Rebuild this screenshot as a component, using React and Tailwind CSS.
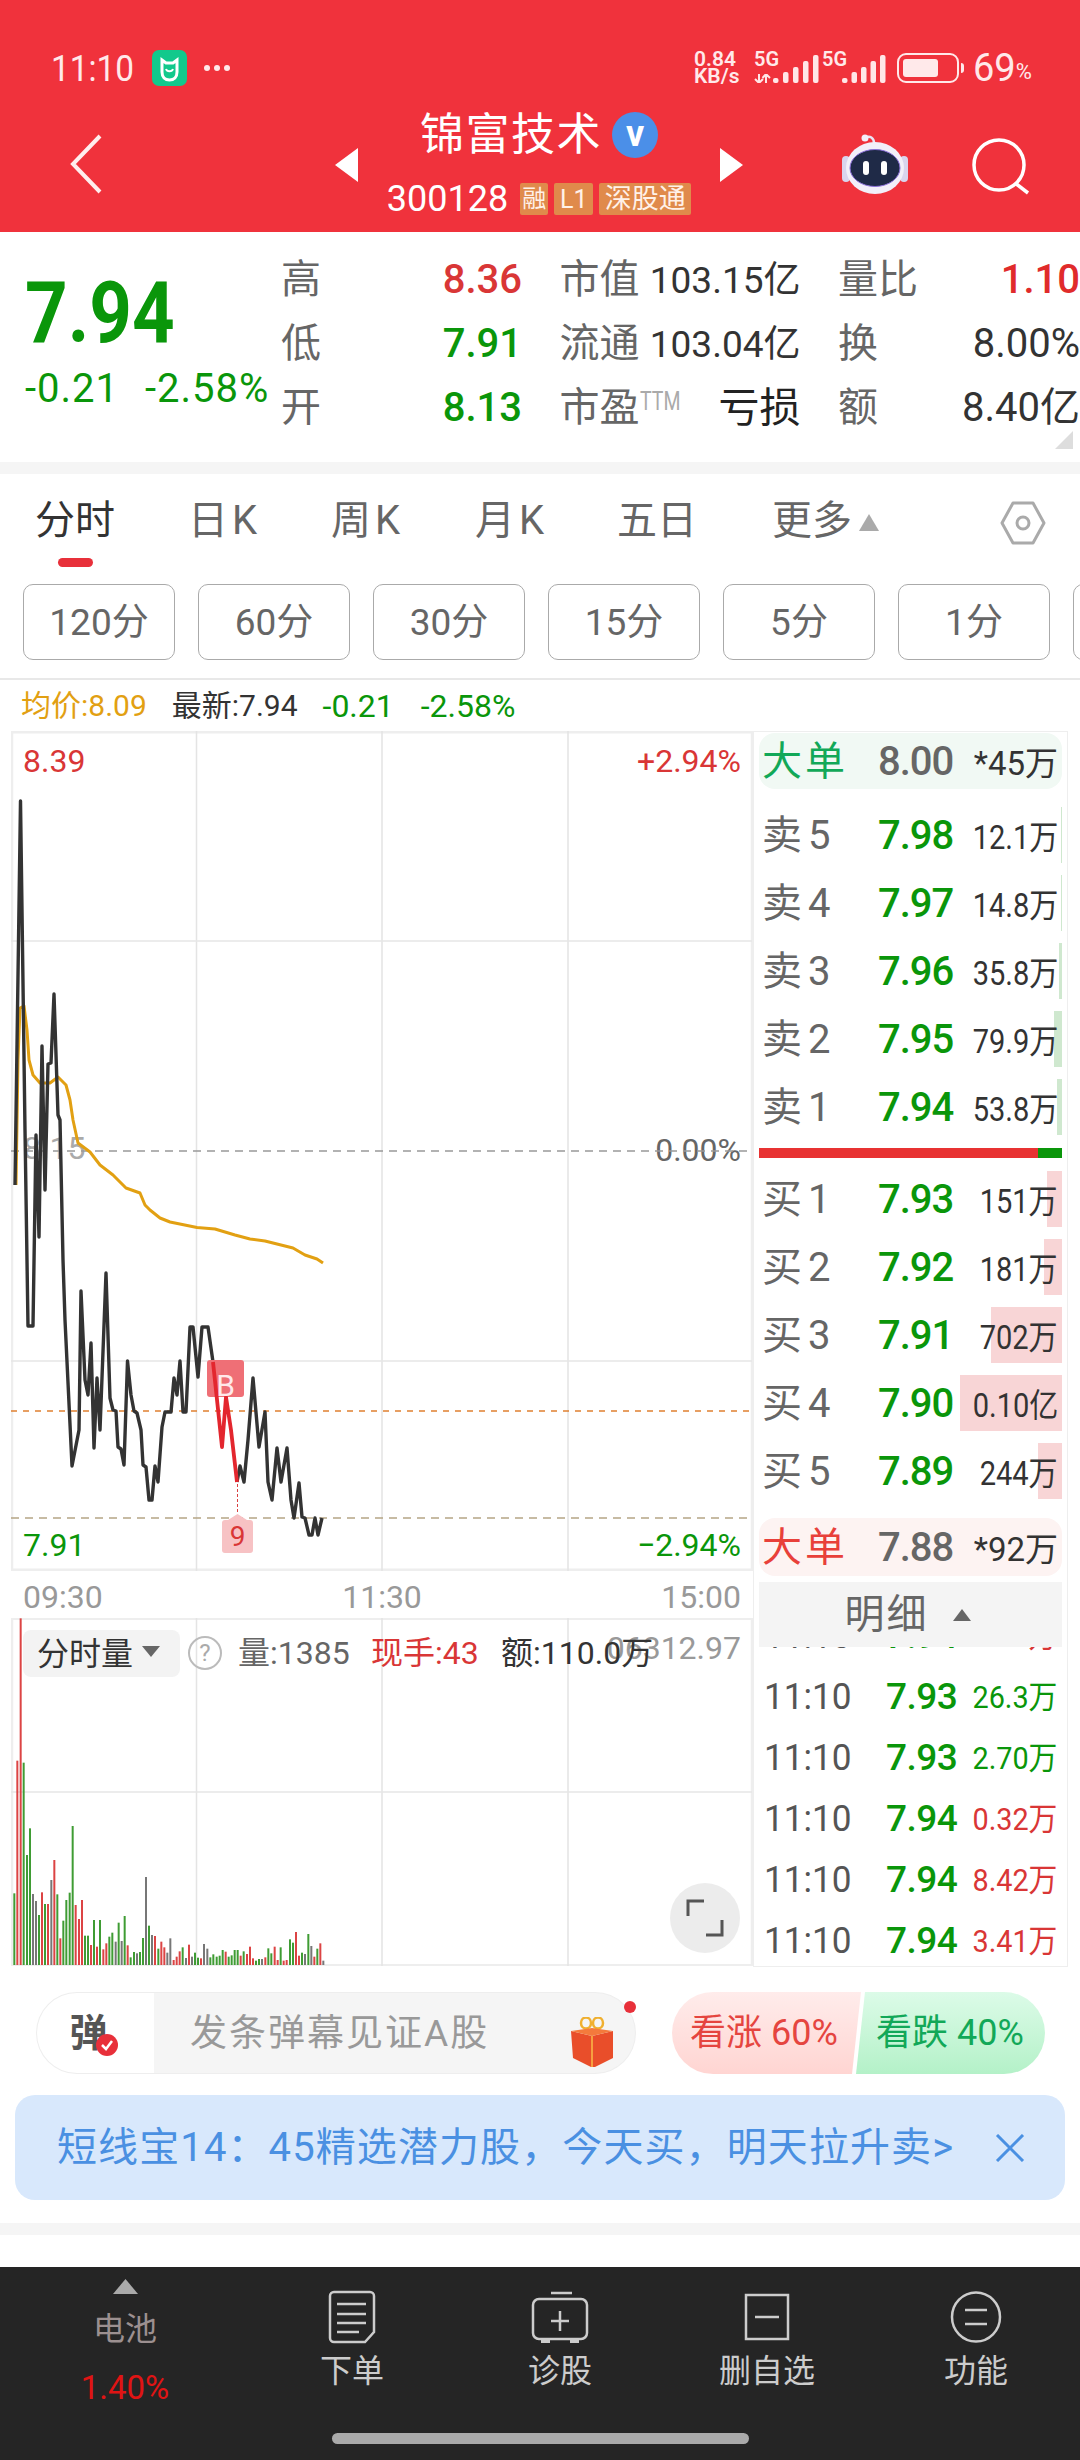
import React from 'react';

const GREEN = 'text-[#0a960a]';

// 分时线 (page coordinates)
const blackA = '15,1185 20.5,801 25,1130 28,1326 33,1326 36,1135 39,1237 42,1046 45,1190 48,1064 51,1063 54,994 58,1115 60,1120 63,1260 65,1320 72,1466 79,1430 81,1291 85,1380 88,1395 91,1343 94,1448 97,1378 100,1430 106,1273 110,1398 113,1410 116,1411 118,1447 121,1449 124,1465 127.5,1361 131,1395 134,1411 137,1413 141,1430 143,1465 146,1467 149,1500 152,1500 155,1466 158,1482 162,1427 165,1412 171,1412 174,1378 177,1395 180,1361 183,1412 186,1412 190,1327 193,1327 198,1377 202,1327 208,1327 213,1362';
const redLine = '213,1362 222,1447 226,1397 231,1430 237,1482';
const blackB = '237,1482 240,1466 244,1482 248,1440 253,1378 259,1447 265,1412 268,1482 272,1500 277,1448 281,1482 287,1448 291,1500 294,1518 299,1483 302,1517 305,1518 309,1535 312,1535 315,1518 318,1535 322,1518';
const avgLine = '16,1185 18,1060 20,1008 24,1006 27,1030 29,1060 33,1075 40,1083 50,1083 58,1077 66,1085 70,1100 73,1120 78,1143 90,1152 100,1165 113,1175 126,1188 140,1193 145,1205 150,1210 160,1218 170,1222 197,1227.5 215,1229 235,1235 250,1239 265,1241 285,1246 293,1248 305,1255 317,1259 323,1263';

// 成交量柱: [x*3, top*3 offset, colour]
const volBars = [
  [43, 850, 'g'], [52, 452, 'r'], [62, 25, 'r'], [71, 458, 'g'], [81, 735, 'g'], [90, 655, 'g'], [99, 852, 'k'], [108, 873, 'k'], [117, 915, 'g'], [126, 847, 'r'],
  [135, 882, 'g'], [144, 882, 'r'], [154, 810, 'k'], [163, 750, 'r'], [172, 853, 'g'], [181, 985, 'r'], [190, 932, 'g'], [199, 870, 'g'], [209, 848, 'g'], [218, 648, 'g'],
  [227, 885, 'r'], [237, 927, 'r'], [246, 870, 'r'], [255, 977, 'g'], [264, 977, 'g'], [273, 1005, 'r'], [282, 930, 'g'], [291, 1010, 'r'], [300, 930, 'g'], [310, 1018, 'r'],
  [319, 1000, 'r'], [328, 980, 'g'], [337, 968, 'g'], [347, 995, 'k'], [356, 938, 'g'], [365, 993, 'k'], [374, 918, 'g'], [383, 1006, 'r'], [392, 1042, 'g'], [402, 1026, 'g'],
  [411, 1030, 'k'], [420, 1026, 'g'], [429, 984, 'g'], [438, 801, 'k'], [447, 947, 'g'], [456, 975, 'k'], [465, 978, 'r'], [475, 1016, 'g'], [484, 995, 'r'], [493, 1012, 'r'],
  [502, 1028, 'k'], [511, 985, 'k'], [521, 1050, 'r'], [530, 1040, 'r'], [539, 1024, 'r'], [548, 1012, 'g'], [558, 1044, 'k'], [567, 1004, 'r'], [576, 1040, 'k'], [585, 1028, 'g'],
  [594, 1043, 'g'], [603, 1045, 'r'], [612, 1002, 'k'], [622, 1016, 'k'], [631, 1042, 'g'], [640, 1033, 'g'], [650, 1040, 'g'], [659, 1037, 'g'], [668, 1020, 'g'], [677, 1025, 'r'],
  [686, 1040, 'g'], [695, 1036, 'g'], [704, 1020, 'g'], [713, 1020, 'g'], [722, 1037, 'r'], [731, 1024, 'g'], [741, 1032, 'r'], [750, 1010, 'r'], [759, 1045, 'r'], [768, 1052, 'g'],
  [777, 1047, 'g'], [786, 1047, 'k'], [796, 1042, 'r'], [805, 1015, 'g'], [814, 1030, 'g'], [824, 1010, 'r'], [833, 1050, 'r'], [842, 1012, 'g'], [851, 1052, 'r'], [860, 1050, 'r'],
  [870, 988, 'g'], [879, 998, 'g'], [888, 966, 'r'], [897, 1037, 'r'], [906, 1028, 'g'], [915, 1032, 'k'], [925, 972, 'g'], [934, 1008, 'k'], [943, 1040, 'r'], [952, 1016, 'g'],
  [961, 1000, 'r'], [970, 1052, 'k'],
];
const volColors = { g: '#3f9c34', r: '#dc4444', k: '#777777' };

const sells = [
  { n: 5, p: '7.98', v: '12.1万', w: 'w-[1px]' },
  { n: 4, p: '7.97', v: '14.8万', w: 'w-[1px]' },
  { n: 3, p: '7.96', v: '35.8万', w: 'w-[3px]' },
  { n: 2, p: '7.95', v: '79.9万', w: 'w-[8px]' },
  { n: 1, p: '7.94', v: '53.8万', w: 'w-[5px]' },
];
const buys = [
  { n: 1, p: '7.93', v: '151万', w: 'w-[15px]' },
  { n: 2, p: '7.92', v: '181万', w: 'w-[18px]' },
  { n: 3, p: '7.91', v: '702万', w: 'w-[71px]' },
  { n: 4, p: '7.90', v: '0.10亿', w: 'w-[102px]' },
  { n: 5, p: '7.89', v: '244万', w: 'w-[24px]' },
];
const ticks = [
  { p: '7.94', v: '3.74万', c: 'text-[#d93636]' },
  { p: '7.93', v: '26.3万', c: GREEN },
  { p: '7.93', v: '2.70万', c: GREEN },
  { p: '7.94', v: '0.32万', c: 'text-[#d93636]' },
  { p: '7.94', v: '8.42万', c: 'text-[#d93636]' },
  { p: '7.94', v: '3.41万', c: 'text-[#d93636]' },
];

const SignalBars = ({ x, pitch }) => (
  <svg width="56" height="28" viewBox="0 0 56 28" className="absolute bottom-0 right-0">
    {[[0, 23, 5], [1, 17, 11], [2, 12, 16], [3, 6, 22], [4, 0, 28]].map(([i, y, h]) => (
      <rect key={i} x={x + i * pitch} y={y} width="5.5" height={h} rx="2" fill="#ffe6e7" />
    ))}
  </svg>
);

const StatusBar = () => (
  <div className="flex h-[104px] items-center pt-[32px] pl-[51px] text-[#ffe9ea]">
    <span className="w-[101px] scale-x-90 origin-left text-[37px] leading-none">11:10</span>
    <svg width="35" height="36" viewBox="0 0 35 36">
      <rect width="35" height="36" rx="7" fill="#12c98c" />
      <path d="M10 10l4 3h7l4-3v12c0 5-3 8-7.500 8S10 27 10 22z" fill="none" stroke="#fff" strokeWidth="3" />
      <path d="M14 19c1 3 6 3 7 0" fill="none" stroke="#fff" strokeWidth="2" />
    </svg>
    <div className="ml-[17px] flex gap-[4px]">
      <span className="h-[6px] w-[6px] rounded-full bg-[#ffe9ea]" />
      <span className="h-[6px] w-[6px] rounded-full bg-[#ffe9ea]" />
      <span className="h-[6px] w-[6px] rounded-full bg-[#ffe9ea]" />
    </div>
    <div className="ml-[464px] flex w-[48px] flex-col text-[21px] font-semibold leading-[17px]">
      <span>0.84</span>
      <span className="whitespace-nowrap">KB/s</span>
    </div>
    <div className="relative mb-[4px] ml-[12px] h-[34px] w-[66px]">
      <span className="absolute left-0 top-0 text-[20px] font-semibold leading-none">5G</span>
      <svg width="18" height="9" viewBox="0 0 18 9" className="absolute bottom-0 left-0">
        <path d="M5 0v9M1 5l4 4 4-4M12 9V0M8.500 4l3.500-4 4 4" fill="none" stroke="#ffe6e7" strokeWidth="2" />
      </svg>
      <SignalBars x={9} pitch={10} />
    </div>
    <div className="relative mb-[4px] ml-[2px] h-[34px] w-[64px]">
      <span className="absolute left-0 top-0 text-[20px] font-semibold leading-none">5G</span>
      <SignalBars x={12} pitch={9.5} />
    </div>
    <div className="ml-[11px] flex items-center">
      <div className="h-[30px] w-[62px] rounded-[9px] border-[2.5px] border-[#ffe9ea] p-[4px]">
        <div className="h-full w-[69%] rounded-[3px] bg-[#ffe9ea]" />
      </div>
      <div className="ml-[2px] h-[10px] w-[3px] rounded-r bg-[#ffe9ea]" />
    </div>
    <span className="ml-[9px] text-[38px] leading-none">69</span>
    <span className="mt-[8px] text-[22px] leading-none">%</span>
  </div>
);

const NavBar = () => (
  <div className="flex h-[128px] items-center">
    <div className="mb-[8px] w-[335px] pl-[68px]">
      <svg width="36" height="60" viewBox="0 0 36 60">
        <path d="M32 2L5 30l27 28" fill="none" stroke="#ffeeee" strokeWidth="4" />
      </svg>
    </div>
    <svg width="23" height="34" viewBox="0 0 23 34" className="mb-[6px]">
      <path d="M23 0v34L0 17z" fill="#fff" />
    </svg>
    <div className="flex w-[362px] flex-col items-center self-start pt-[8px] text-white">
      <div className="flex h-[46px] items-center">
        <span className="text-[44px] leading-none tracking-[1.5px]">锦富技术</span>
        <span className="ml-[10px] flex h-[46px] w-[46px] items-center justify-center rounded-full bg-[#4b8fe8] pb-[3px] text-[36px] font-bold leading-none">v</span>
      </div>
      <div className="mt-[25px] flex h-[32px] items-center text-[#fff1e8]">
        <span className="mr-[12px] text-[36px] leading-none text-white">300128</span>
        <span className="flex h-[32px] w-[28px] items-center justify-center rounded-[2px] bg-[#e08a4b] text-[24px] leading-none">融</span>
        <span className="ml-[6px] flex h-[32px] w-[39px] items-center justify-center rounded-[2px] bg-[#e08a4b] text-[25px] leading-none">L1</span>
        <span className="ml-[6px] flex h-[32px] w-[92px] items-center justify-center rounded-[2px] bg-[#e08a4b] text-[27px] leading-none">深股通</span>
      </div>
    </div>
    <svg width="23" height="34" viewBox="0 0 23 34" className="mb-[6px]">
      <path d="M0 0v34l23-17z" fill="#fff" />
    </svg>
    <svg width="68" height="62" viewBox="842 133 68 62" className="ml-[99px] mb-[6px]">
      <path d="M865 137c5-3 9 0 9 5" fill="none" stroke="#e9e4f5" strokeWidth="2.500" />
      <circle cx="865" cy="137" r="3.500" fill="#f3effa" />
      <rect x="842" y="155" width="8" height="26" rx="4" fill="#d9d4ee" />
      <rect x="900" y="155" width="8" height="26" rx="4" fill="#d9d4ee" />
      <ellipse cx="875" cy="167" rx="29" ry="26" fill="#f2eff9" />
      <ellipse cx="875" cy="167" rx="25" ry="18.500" fill="#1f2a47" stroke="#8a6fd8" strokeWidth="1" />
      <rect x="863" y="160" width="6" height="14" rx="3" fill="#fff" />
      <rect x="881" y="160" width="6" height="14" rx="3" fill="#fff" />
    </svg>
    <svg width="62" height="62" viewBox="970 134 62 62" className="ml-[60px] mb-[6px]">
      <circle cx="999" cy="165" r="25" fill="none" stroke="#fff" strokeWidth="3.500" />
      <path d="M1015 183l13 10" fill="none" stroke="#fff" strokeWidth="3.500" />
    </svg>
  </div>
);

const QuoteLabel = ({ children }) => <span className="text-[40px] leading-none text-[#666]">{children}</span>;

const Quote = () => (
  <div className="relative flex h-[230px] bg-white">
    <div className="w-[281px] pl-[25px] pt-[38px]">
      <div className={`origin-left scale-x-[0.865] text-[86px] font-bold leading-[86px] ${GREEN}`}>7.94</div>
      <div className={`mt-[13px] flex text-[40px] leading-none tracking-[1px] ${GREEN}`}>
        <span className="w-[120px]">-0.21</span>
        <span>-2.58%</span>
      </div>
    </div>
    <div className="grid grid-cols-[241px_241px_242px] grid-rows-[64px_64px_64px] items-center gap-x-[37.5px] pt-[16px]">
      <div className="flex items-center justify-between"><QuoteLabel>高</QuoteLabel><span className="text-[40px] font-medium leading-none text-[#d93636]">8.36</span></div>
      <div className="flex items-center justify-between"><QuoteLabel>市值</QuoteLabel><span className="text-[37px] leading-none text-[#333]">103.15亿</span></div>
      <div className="flex items-center justify-between"><QuoteLabel>量比</QuoteLabel><span className="text-[40px] font-medium leading-none text-[#e02b2b]">1.10</span></div>
      <div className="flex items-center justify-between"><QuoteLabel>低</QuoteLabel><span className={`text-[40px] font-medium leading-none ${GREEN}`}>7.91</span></div>
      <div className="flex items-center justify-between"><QuoteLabel>流通</QuoteLabel><span className="text-[37px] leading-none text-[#333]">103.04亿</span></div>
      <div className="flex items-center justify-between"><QuoteLabel>换</QuoteLabel><span className="text-[40px] leading-none text-[#333]">8.00%</span></div>
      <div className="flex items-center justify-between"><QuoteLabel>开</QuoteLabel><span className={`text-[40px] font-medium leading-none ${GREEN}`}>8.13</span></div>
      <div className="flex items-center justify-between">
        <span className="flex items-start"><QuoteLabel>市盈</QuoteLabel><span className="origin-left scale-x-75 text-[26px] leading-none text-[#aaa]">TTM</span></span>
        <span className="text-[41px] leading-none text-[#222]">亏损</span>
      </div>
      <div className="flex items-center justify-between"><QuoteLabel>额</QuoteLabel><span className="text-[40px] leading-none text-[#333]">8.40亿</span></div>
    </div>
    <svg width="18" height="18" viewBox="0 0 18 18" className="absolute right-[7px] bottom-[13px]">
      <path d="M18 0v18H0z" fill="#dddddd" />
    </svg>
  </div>
);

const Tabs = () => (
  <div className="relative flex h-[100px] items-start whitespace-nowrap bg-white pl-[35px] pt-[27px] text-[40px] leading-none text-[#666]">
    <span className="w-[80px] shrink-0 text-[#333]">分时</span>
    <span className="ml-[73px] w-[70px] shrink-0 tracking-[4px]">日K</span>
    <span className="ml-[73px] w-[70px] shrink-0 tracking-[4px]">周K</span>
    <span className="ml-[74px] w-[69px] shrink-0 tracking-[4px]">月K</span>
    <span className="ml-[73px] w-[80px] shrink-0">五日</span>
    <span className="ml-[75px] w-[80px] shrink-0">更多</span>
    <svg width="20" height="17" viewBox="0 0 20 17" className="ml-[7px] mt-[13px] shrink-0">
      <path d="M10 0l10 17H0z" fill="#aaaaaa" />
    </svg>
    <svg width="46" height="44" viewBox="0 0 46 44" className="ml-[121px] shrink-0">
      <path d="M13 2h20l11 20-11 20H13L2 22z" fill="none" stroke="#aaaaaa" strokeWidth="3" strokeLinejoin="round" />
      <circle cx="23" cy="22" r="6" fill="none" stroke="#aaaaaa" strokeWidth="3" />
    </svg>
    <div className="absolute left-[58px] top-[84px] h-[9px] w-[35px] rounded-full bg-[#e8303a]" />
  </div>
);

const Chips = () => (
  <div className="flex gap-[23px] overflow-hidden bg-white pl-[23px] pt-[10px]">
    {['120分', '60分', '30分', '15分', '5分', '1分', '日'].map((t, i) => (
      <div key={t} className="flex h-[76px] w-[152px] shrink-0 items-center justify-center rounded-[10px] border border-[#aaaaaa] text-[37px] leading-none text-[#666]">
        {i < 6 ? t : ''}
      </div>
    ))}
  </div>
);

const PriceChart = () => (
  <div className="relative h-[840px] w-[742px]">
    <span className="absolute left-[12px] top-[14px] text-[32px] leading-none text-[#d93636]">8.39</span>
    <span className="absolute right-[12px] top-[14px] text-[32px] leading-none text-[#d93636]">+2.94%</span>
    <span className="absolute left-[12px] top-[401px] text-[32px] leading-none text-[#aaaaaa]">8.15</span>
    <span className="absolute right-[12px] top-[403px] text-[32px] leading-none text-[#666]">0.00%</span>
    <span className={`absolute left-[12px] top-[798px] text-[32px] leading-none ${GREEN}`}>7.91</span>
    <span className={`absolute right-[12px] top-[798px] text-[32px] leading-none ${GREEN}`}>−2.94%</span>
    <svg width="742" height="840" viewBox="11 731 742 840" className="relative block">
      <path d="M11 732h741M11 1570h741" stroke="#eeeeee" strokeWidth="3" />
      <path d="M12 731v840M752 731v840" stroke="#eeeeee" strokeWidth="2.500" />
      <path d="M196.500 731v840M382 731v840M568 731v840" stroke="#e4e4e4" strokeWidth="1.500" />
      <path d="M11 941h741M11 1361h741" stroke="#e6e6e6" strokeWidth="1.500" />
      <path d="M11 1151h741" stroke="#999999" strokeWidth="1.500" strokeDasharray="8 6" />
      <path d="M11 1411h741" stroke="#e08030" strokeWidth="1.500" strokeDasharray="6 6" />
      <path d="M11 1518h741" stroke="#b5a585" strokeWidth="1.500" strokeDasharray="8 6" />
      <polyline points={avgLine} fill="none" stroke="#e2a012" strokeWidth="3" strokeLinejoin="round" />
      <polyline points={blackA} fill="none" stroke="#333333" strokeWidth="3.400" strokeLinejoin="round" />
      <polyline points={blackB} fill="none" stroke="#333333" strokeWidth="3.400" strokeLinejoin="round" />
      <rect x="207" y="1360" width="37" height="37" rx="3" fill="#ef6f76" />
      <polyline points={redLine} fill="none" stroke="#e3262e" strokeWidth="3.800" strokeLinejoin="round" />
      <path d="M237.500 1484v30" stroke="#d94040" strokeWidth="1" strokeDasharray="3 2" />
      <path d="M228 1520l9.500-6 9.500 6h3a3 3 0 013 3v27a3 3 0 01-3 3h-25a3 3 0 01-3-3v-27a3 3 0 013-3z" fill="#f7c2c4" />
    </svg>
    <span className="absolute left-[196px] top-[636px] flex h-[37px] w-[37px] items-center justify-center text-[30px] leading-none text-[#ffe9ea]">B</span>
    <span className="absolute left-[211px] top-[789px] flex h-[33px] w-[31px] items-center justify-center text-[28px] leading-none text-[#d93636]">9</span>
  </div>
);

const VolumeChart = () => (
  <div className="relative h-[348px] w-[742px]">
    <span className="absolute right-[12px] top-[14px] text-[32px] leading-none text-[#999999]">06312.97</span>
    <svg width="742" height="348" viewBox="11 1618 742 348" className="relative block">
      <path d="M11 1619h741M11 1965h741" stroke="#eeeeee" strokeWidth="2" />
      <path d="M12 1618v348M752 1618v348" stroke="#eeeeee" strokeWidth="2.500" />
      <path d="M196.500 1618v348M382 1618v348M568 1618v348" stroke="#e4e4e4" strokeWidth="1.500" />
      <path d="M11 1792h741" stroke="#e6e6e6" strokeWidth="1.500" />
      {volBars.map(([u, v, c]) => (
        <rect key={u} x={u / 3 - 1} y={1610 + v / 3} width="2" height={1965 - (1610 + v / 3)} fill={volColors[c]} />
      ))}
    </svg>
    <div className="absolute left-[12px] top-[12px] flex h-[47px] w-[157px] items-center rounded-[8px] bg-[#f3f3f3] pl-[14px] text-[32px] leading-none text-[#333]">
      分时量
      <svg width="18" height="11" viewBox="0 0 18 11" className="ml-[9px] mb-[4px]">
        <path d="M0 0h18L9 11z" fill="#666666" />
      </svg>
    </div>
    <div className="absolute left-[177px] top-[18px] flex h-[34px] w-[34px] items-center justify-center rounded-full border-[2px] border-[#bbbbbb] text-[24px] leading-none text-[#aaaaaa]">?</div>
    <span className="absolute left-[227px] top-[19px] text-[32px] leading-none text-[#666]">量:1385</span>
    <span className="absolute left-[360px] top-[19px] text-[32px] leading-none text-[#d93636]">现手:43</span>
    <span className="absolute left-[490px] top-[19px] text-[32px] leading-none text-[#333]">额:110.0万</span>
    <div className="absolute left-[659px] top-[265px] flex h-[70px] w-[70px] items-center justify-center rounded-full bg-[#ececec]">
      <svg width="38" height="38" viewBox="0 0 38 38">
        <path d="M2 17V2h16M36 21v15H20" fill="none" stroke="#555555" strokeWidth="3" />
      </svg>
    </div>
  </div>
);

const OrderRow = ({ label, num, price, vol, bar, barColor, priceClass = GREEN, labelClass = 'text-[#666]', bgClass = '', h = 'h-[56px]', volScale = 'scale-x-[0.88]' }) => (
  <div className={`relative flex items-center pl-[3px] pr-[4px] pt-[2px] ${h} ${bgClass}`}>
    {bar && <div className={`absolute bottom-0 right-0 top-0 ${bar} ${barColor}`} />}
    <div className={`relative flex w-[116px] items-center text-[40px] leading-none ${labelClass}`}>
      {label}
      {num && <span className="ml-[6px]">{num}</span>}
    </div>
    <span className={`relative text-[40px] font-medium leading-none tracking-[-1px] ${priceClass}`}>{price}</span>
    <span className={`relative ml-auto mt-[3px] origin-right ${volScale} whitespace-nowrap text-[33px] leading-none text-[#333]`}>{vol}</span>
  </div>
);

const OrderPanel = () => (
  <div className="flex h-[1236px] w-[315px] flex-col border border-[#eeeeee] px-[5px]">
    <div className="pt-[1px]">
      <OrderRow label={<span className="whitespace-nowrap tracking-[3px]">大单</span>} price="8.00" vol="*45万" volScale="scale-x-100" priceClass="text-[#666]" labelClass="text-[#12a858]" bgClass="rounded-[16px] bg-[#f1f9f4]" />
    </div>
    <div className="mt-[18px] flex flex-col gap-[12px]">
      {sells.map((r) => (
        <OrderRow key={r.n} label="卖" num={r.n} price={r.p} vol={r.v} bar={r.w} barColor="bg-[#cfe8cf]" />
      ))}
    </div>
    <div className="mt-[13px] flex h-[10px] shrink-0">
      <div className="w-[279px] bg-[#e83232]" />
      <div className="flex-1 bg-[#0a960a]" />
    </div>
    <div className="mt-[13px] flex flex-col gap-[12px]">
      {buys.map((r) => (
        <OrderRow key={r.n} label="买" num={r.n} price={r.p} vol={r.v} bar={r.w} barColor="bg-[#f8d5d6]" />
      ))}
    </div>
    <div className="mt-[19px]">
      <OrderRow label={<span className="whitespace-nowrap tracking-[3px]">大单</span>} price="7.88" vol="*92万" volScale="scale-x-100" priceClass="text-[#666]" labelClass="text-[#e8403a]" bgClass="rounded-[16px] bg-[#fdf3f2]" h="h-[58px]" />
    </div>
    <div className="mt-[6px] flex h-[65px] shrink-0 items-center justify-center bg-[#f4f4f4] pr-[6px] text-[40px] leading-none tracking-[2px] text-[#666]">
      明细
      <svg width="18" height="12" viewBox="0 0 18 12" className="ml-[24px]">
        <path d="M9 0l9 12H0z" fill="#666666" />
      </svg>
    </div>
    <div className="flex-1 overflow-hidden">
      <div className="mt-[-42px]">
        {ticks.map((t, i) => (
          <div key={i} className="flex h-[61px] items-center pl-[5px] pr-[5px]">
            <span className="w-[122px] origin-left scale-x-95 text-[37px] leading-none text-[#555]">11:10</span>
            <span className={`text-[37px] font-medium leading-none tracking-[-0.5px] ${GREEN}`}>{t.p}</span>
            <span className={`ml-auto origin-right scale-x-90 whitespace-nowrap text-[32px] leading-none ${t.c}`}>{t.v}</span>
          </div>
        ))}
      </div>
    </div>
  </div>
);

const Danmaku = () => (
  <div className="flex pl-[36px] pt-[25px]">
    <div className="relative flex h-[82px] w-[600px]">
      <div className="relative flex h-full w-[118px] items-center justify-center rounded-l-full border border-r-0 border-[#eeeeee] bg-white pr-[14px]">
        <span className="text-[38px] font-bold leading-none text-[#555]">弹</span>
        <svg width="22" height="22" viewBox="0 0 22 22" className="absolute left-[59px] top-[41px]">
          <circle cx="11" cy="11" r="11" fill="#e8303a" />
          <path d="M6 11l4 4 6-8" fill="none" stroke="#fff" strokeWidth="2.500" />
        </svg>
      </div>
      <div className="flex flex-1 items-center rounded-r-full border border-l-0 border-[#eeeeee] bg-[#f5f5f5] pl-[36px] text-[37px] leading-none tracking-[2px] text-[#999]">
        发条弹幕见证A股
      </div>
      <svg width="46" height="50" viewBox="0 0 46 50" className="absolute left-[533px] top-[25px]">
        <ellipse cx="17" cy="6" rx="5" ry="5.500" fill="none" stroke="#f0b030" strokeWidth="2.500" />
        <ellipse cx="29" cy="6" rx="5" ry="5.500" fill="none" stroke="#f0b030" strokeWidth="2.500" />
        <path d="M2 14l21 5 21-5v27L26 50H22L4 41z" fill="#e94e2a" />
        <path d="M2 14l21-3 21 3-21 5z" fill="#f47a3c" />
        <path d="M23 19v31" stroke="#f6a040" strokeWidth="2" />
      </svg>
      <div className="absolute left-[588px] top-[9px] h-[12px] w-[12px] rounded-full bg-[#e8303a]" />
    </div>
    <div className="ml-[36px] flex h-[82px] w-[373px] whitespace-nowrap">
      <div className="flex w-[189px] items-center rounded-l-full bg-gradient-to-b from-[#ffeceb] to-[#ffd5d2] pl-[18px] text-[36px] leading-none text-[#e5453f] [clip-path:polygon(0_0,100%_0,calc(100%-9px)_100%,0_100%)]">
        看涨 60%
      </div>
      <div className="-ml-[5px] flex w-[189px] items-center rounded-r-full bg-gradient-to-b from-[#dcfbe8] to-[#b4f1c8] pl-[20px] text-[36px] leading-none text-[#12a858] [clip-path:polygon(9px_0,100%_0,100%_100%,0_100%)]">
        看跌 40%
      </div>
    </div>
  </div>
);

const Banner = () => (
  <div className="mx-[15px] mt-[21px] flex h-[105px] items-center rounded-[20px] bg-[#d8e8fc] pl-[42px] text-[#4a90e2]">
    <span className="whitespace-nowrap text-[40px] leading-none tracking-[1.1px]">短线宝14：45精选潜力股，今天买，明天拉升卖&gt;</span>
    <svg width="30" height="28" viewBox="0 0 30 28" className="ml-[41px]">
      <path d="M2 1l26 26M28 1L2 27" fill="none" stroke="#4a90e2" strokeWidth="3" />
    </svg>
  </div>
);

const NavItem = ({ icon, label, w }) => (
  <div className={`flex flex-col items-center pt-[23px] ${w}`}>
    <div className="flex h-[54px] items-center">{icon}</div>
    <span className="mt-[11px] text-[32px] leading-none text-[#cccccc]">{label}</span>
  </div>
);

const BottomNav = () => (
  <div className="flex h-[193px] flex-col bg-[#252525]">
    <div className="flex flex-1">
      <div className="flex w-[250px] flex-col items-center pt-[12px]">
        <svg width="25" height="15" viewBox="0 0 25 15">
          <path d="M12.500 0L25 15H0z" fill="#aaaaaa" />
        </svg>
        <span className="mt-[19px] text-[32px] leading-none text-[#9c9090]">电池</span>
        <span className="mt-[26px] text-[33px] leading-none text-[#e01414]">1.40%</span>
      </div>
      <NavItem
        w="w-[204px]"
        label="下单"
        icon={
          <svg width="48" height="54" viewBox="0 0 48 54" fill="none" stroke="#cccccc" strokeWidth="2.500">
            <path d="M6 2h36a4 4 0 014 4v36l-9 10H6a4 4 0 01-4-4V6a4 4 0 014-4z" />
            <path d="M9 14h29M9 24h29M9 33h29M9 42h22" />
          </svg>
        }
      />
      <NavItem
        w="w-[212px]"
        label="诊股"
        icon={
          <svg width="58" height="52" viewBox="0 0 58 52" fill="none" stroke="#cccccc" strokeWidth="2.500">
            <path d="M20 2h21" />
            <rect x="2" y="8" width="54" height="40" rx="6" />
            <path d="M29 20v20M20 30h18" />
            <path d="M10 50h9M39 50h9" strokeWidth="4" />
          </svg>
        }
      />
      <NavItem
        w="w-[202px]"
        label="删自选"
        icon={
          <svg width="46" height="48" viewBox="0 0 46 48" fill="none" stroke="#cccccc" strokeWidth="2.500">
            <rect x="2" y="2" width="42" height="44" />
            <path d="M11 24h24" />
          </svg>
        }
      />
      <NavItem
        w="w-[212px] pl-[4px]"
        label="功能"
        icon={
          <svg width="52" height="52" viewBox="0 0 52 52" fill="none" stroke="#cccccc" strokeWidth="2.500">
            <ellipse cx="26" cy="26" rx="24" ry="24.500" />
            <path d="M15 19h22M15 33h22" />
          </svg>
        }
      />
    </div>
    <div className="mx-auto mb-[16px] h-[11px] w-[417px] rounded-full bg-[#aaaaaa]" />
  </div>
);

export default function App() {
  return (
    <div className="flex h-[2460px] w-[1080px] flex-col overflow-hidden bg-white font-[Roboto,'Noto_Sans_CJK_SC',sans-serif]">
      <div className="h-[232px] bg-[#f0323c]">
        <StatusBar />
        <NavBar />
      </div>
      <Quote />
      <div className="h-[12px] bg-[#f5f5f5]" />
      <Tabs />
      <Chips />
      <div className="mt-[18px] h-[2px] bg-[#e8e8e8]" />
      <div className="flex h-[51px] items-center pl-[21px] text-[30px] leading-none">
        <span className="text-[#e2a012]">均价:8.09</span>
        <span className="ml-[25px] text-[#333]">最新:7.94</span>
        <span className={`ml-[25px] text-[32px] ${GREEN}`}>-0.21</span>
        <span className={`ml-[27px] text-[32px] ${GREEN}`}>-2.58%</span>
      </div>
      <div className="flex h-[1236px] pl-[11px]">
        <div className="flex w-[742px] flex-col">
          <PriceChart />
          <div className="flex h-[47px] items-center justify-between px-[12px] pt-[4px] text-[32px] leading-none text-[#999]">
            <span>09:30</span>
            <span>11:30</span>
            <span>15:00</span>
          </div>
          <VolumeChart />
        </div>
        <OrderPanel />
      </div>
      <Danmaku />
      <Banner />
      <div className="mt-[23px] h-[12px] bg-[#f5f5f5]" />
      <div className="flex-1" />
      <BottomNav />
    </div>
  );
}
